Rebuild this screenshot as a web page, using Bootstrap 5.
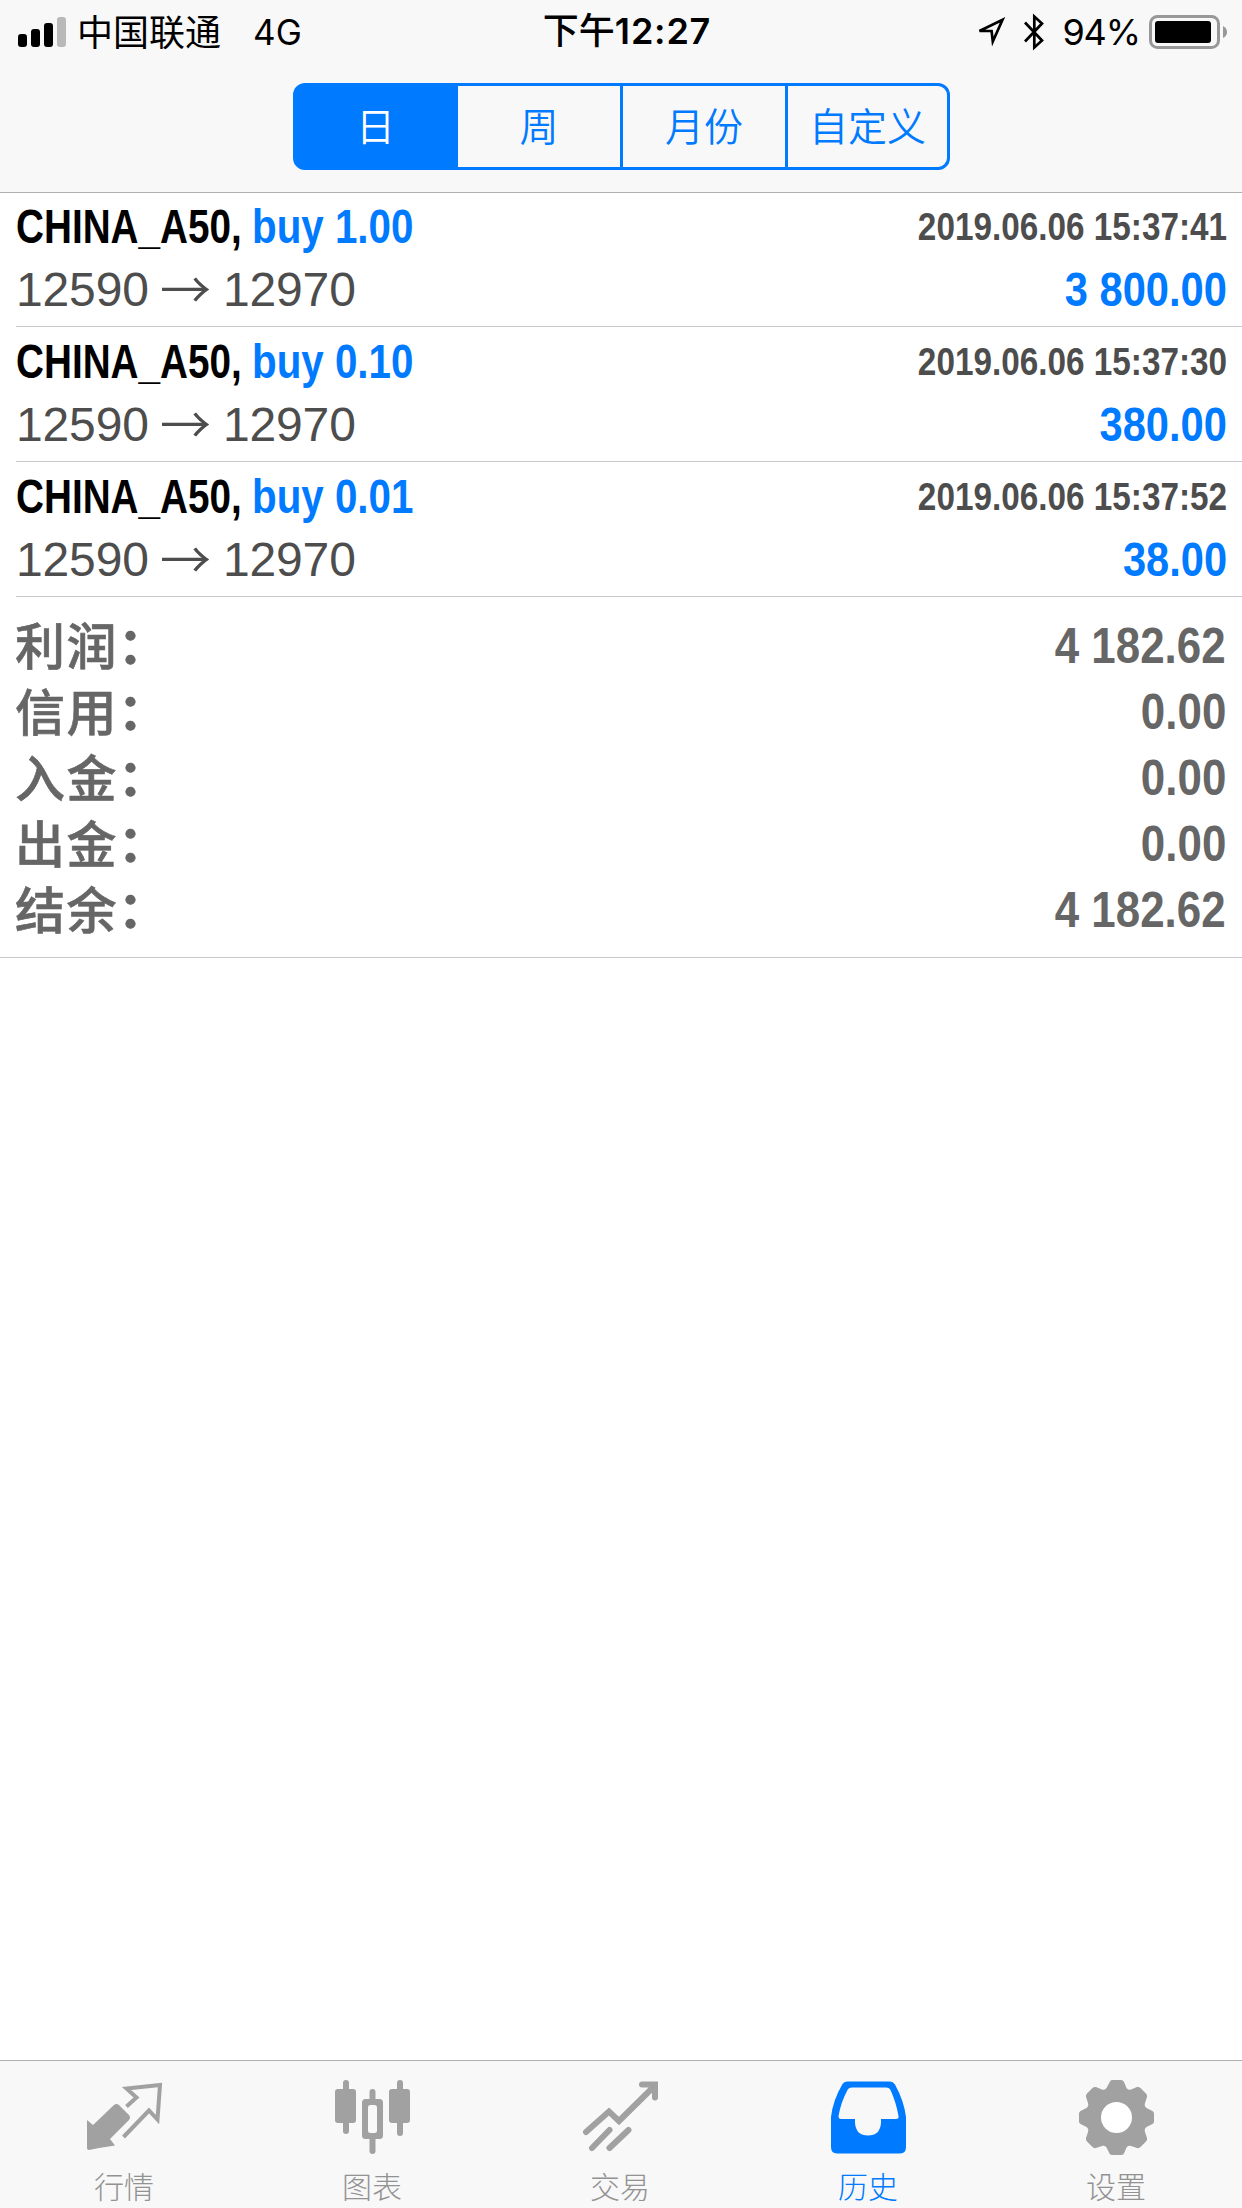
<!DOCTYPE html>
<html lang="zh-CN">
<head>
<meta charset="utf-8">
<meta name="viewport" content="width=device-width, initial-scale=1">
<title>历史</title>
<link href="https://cdn.jsdelivr.net/npm/bootstrap@5.3.0/dist/css/bootstrap.min.css" rel="stylesheet">
<style>
:root{--ios-blue:#007aff;--bar:#f8f8f8}
body{font-family:"Liberation Sans","Noto Sans CJK SC",sans-serif;color:#000;background:#fff}
.screen{height:2208px;width:1242px;overflow:hidden}
.top-area{background:var(--bar);height:193px;border-bottom:1px solid #b0b0b0}
.status{height:64px;padding:0 14px 0 18px;font:400 36px/62px Inter,"Noto Sans CJK SC",sans-serif;white-space:nowrap}
.status>div{flex:1 1 0}
.clock{font-weight:500;font-size:36px;line-height:60px;padding:0 0 3px 8px}
.clock b{font-weight:600;letter-spacing:.8px}
.cn{font-family:"Noto Sans CJK SC",sans-serif}
.carrier{margin-left:11px;font-size:36px;padding-bottom:5px}
.net{margin-left:32px;font-size:35px}
.net,.pct{line-height:60px;padding-bottom:1px}
.pct{letter-spacing:-1.1px;font-size:36px}
.seg{width:657px;height:87px;margin:19px 0 0 293px}
.seg .btn{flex:0 0 168px;padding:0 0 5px;border:3px solid var(--ios-blue);border-radius:12px;color:var(--ios-blue);background:transparent;font:350 39px/76px "Noto Sans CJK SC",sans-serif}
.seg .btn:first-child,.seg .btn:last-child{flex-basis:165px}
.seg .btn+.btn{margin-left:-3px!important}
.seg .btn.active{background:var(--ios-blue);border-color:var(--ios-blue);color:#fff}
main{margin-top:-1px}
.deal{height:135px;padding:5px 0 0;margin-left:16px;border-bottom:1px solid #c8c7cc}
.deal .line-a{height:63px;padding-right:15px}
.deal .line-b{height:60px;padding-right:15px}
.deal span{white-space:nowrap;line-height:60px}
.sym,.act,.when,.gain,.sum-val{font-weight:700;display:inline-block}
.sym{font-size:48px;width:236px;transform:scaleX(.806);transform-origin:0 50%}
.act{font-size:48px;transform:scaleX(.84);transform-origin:0 50%;color:var(--ios-blue)}
.when{font-size:39px;color:#4d4d4d;transform:scaleX(.854);transform-origin:100% 50%}
.gain{font-size:48px;color:var(--ios-blue);transform:scaleX(.867);transform-origin:100% 50%}
.price{font-size:48px;color:#4d4d4d;letter-spacing:-.15px}
.deal .arrow{font-family:"Noto Sans CJK SC",sans-serif;font-weight:350;font-size:51px;line-height:0;vertical-align:-3px;margin:0 -1px 0 -2px}
.sums{padding:16px 16px 0 15px;height:361px;border-bottom:1px solid #c8c7cc;color:#666}
.sum-row{height:66px}
.sum-key{font:500 50px/60px "Noto Sans CJK SC",sans-serif;letter-spacing:1.5px;-webkit-text-stroke:.6px #666}
.sum-key i{font-style:normal;font-weight:700;line-height:0;vertical-align:1px;margin-left:0}
.sum-val{font-size:50px;line-height:66px;transform:scaleX(.878);transform-origin:100% 50%}
.tabs{height:148px;background:var(--bar);border-top:1px solid #b0b0b0;padding-right:2px}
.tab{flex:1 1 0;color:#929292;text-decoration:none;padding-top:19px}
.tab svg{width:75px;height:75px;color:#a1a1a1}
.tab span{font:300 30px/36px "Noto Sans CJK SC",sans-serif;margin-top:12px}
.tab.active,.tab.active svg{color:var(--ios-blue)}
</style>
</head>
<body>
<div class="screen d-flex flex-column">
  <header class="top-area">
    <div class="status d-flex align-items-center">
      <div class="d-flex align-items-center">
        <svg width="48" height="31" viewBox="0 0 48 31"><rect y="17" width="9" height="13" rx="3"/><rect x="13" y="12" width="9" height="18" rx="3"/><rect x="26" y="6" width="9" height="24" rx="3"/><rect x="39" width="9" height="30" rx="3" fill="#b9b9b9"/></svg>
        <span class="carrier cn">中国联通</span><span class="net">4G</span>
      </div>
      <span class="clock">下午<b>12:27</b></span>
      <div class="d-flex align-items-center justify-content-end">
        <svg width="30" height="30" viewBox="0 0 30 30"><path d="M3.500 14 26.500 2.800 16.800 24.500 15.600 14Z" fill="none" stroke="#000" stroke-width="2.700"/></svg>
        <svg class="ms-3" width="24" height="38" viewBox="0 0 24 38"><path d="M3 9.500 20 27.500 12.300 34.500V3.500L20 10.500 3 28.500" fill="none" stroke="#000" stroke-width="2.700"/></svg>
        <span class="pct ms-3">94%</span>
        <svg class="ms-2" width="80" height="36" viewBox="0 0 80 36"><rect x="2.500" y="2.500" width="68" height="31" rx="7" fill="none" stroke="#989898" stroke-width="3"/><rect x="7" y="7" width="56" height="22" rx="3"/><path d="M75 12q4 2 4 6t-4 6z" fill="#989898"/></svg>
      </div>
    </div>
    <div class="seg btn-group">
      <button type="button" class="btn active">日</button>
      <button type="button" class="btn">周</button>
      <button type="button" class="btn">月份</button>
      <button type="button" class="btn">自定义</button>
    </div>
  </header>
  <main class="flex-grow-1">
    <section class="deal">
      <div class="line-a d-flex justify-content-between"><div><span class="sym">CHINA_A50,</span><span class="act">buy 1.00</span></div><span class="when">2019.06.06 15:37:41</span></div>
      <div class="line-b d-flex justify-content-between"><span class="price">12590 <span class="arrow">→</span> 12970</span><span class="gain">3 800.00</span></div>
    </section>
    <section class="deal">
      <div class="line-a d-flex justify-content-between"><div><span class="sym">CHINA_A50,</span><span class="act">buy 0.10</span></div><span class="when">2019.06.06 15:37:30</span></div>
      <div class="line-b d-flex justify-content-between"><span class="price">12590 <span class="arrow">→</span> 12970</span><span class="gain">380.00</span></div>
    </section>
    <section class="deal">
      <div class="line-a d-flex justify-content-between"><div><span class="sym">CHINA_A50,</span><span class="act">buy 0.01</span></div><span class="when">2019.06.06 15:37:52</span></div>
      <div class="line-b d-flex justify-content-between"><span class="price">12590 <span class="arrow">→</span> 12970</span><span class="gain">38.00</span></div>
    </section>
    <section class="sums">
      <div class="sum-row d-flex justify-content-between"><span class="sum-key">利润<i>：</i></span><span class="sum-val">4 182.62</span></div>
      <div class="sum-row d-flex justify-content-between"><span class="sum-key">信用<i>：</i></span><span class="sum-val">0.00</span></div>
      <div class="sum-row d-flex justify-content-between"><span class="sum-key">入金<i>：</i></span><span class="sum-val">0.00</span></div>
      <div class="sum-row d-flex justify-content-between"><span class="sum-key">出金<i>：</i></span><span class="sum-val">0.00</span></div>
      <div class="sum-row d-flex justify-content-between"><span class="sum-key">结余<i>：</i></span><span class="sum-val">4 182.62</span></div>
    </section>
  </main>
  <nav class="tabs d-flex">
    <a class="tab d-flex flex-column align-items-center" href="#">
      <svg viewBox="0 0 75 75"><path d="M0 40 6 45 27 25Q29.500 23 32 25L42 35Q44 37.500 42 40L23 59 28 65.500Q14 67.500 2 70Q0 70 0 68Z" fill="currentColor"/><path d="M39.500 26.500 49.500 17.500 39.500 8.500 73 5 70.500 39.500 62 30.500 36.500 57" fill="none" stroke="currentColor" stroke-width="4"/></svg>
      <span>行情</span></a>
    <a class="tab d-flex flex-column align-items-center" href="#">
      <svg viewBox="0 0 75 75" fill="currentColor"><rect x="8" y="0" width="6" height="54" rx="3"/><rect y="9" width="21" height="34" rx="3"/><rect x="62" y="0" width="6" height="56" rx="3"/><rect x="54" y="9" width="21" height="34" rx="3"/><path d="M34.500 12q0-3 3-3t3 3v7h4q3.500 0 3.500 3.500v33q0 3.500-3.500 3.500h-4v12q0 3-3 3t-3-3v-12h-4q-3.500 0-3.500-3.500v-33q0-3.500 3.500-3.500h4zM35.500 25q-2.500 0-2.500 2.500v23q0 2.500 2.500 2.500h4q2.500 0 2.500-2.500v-23q0-2.500-2.500-2.500z" fill-rule="evenodd"/></svg>
      <span>图表</span></a>
    <a class="tab d-flex flex-column align-items-center" href="#">
      <svg viewBox="0 0 75 75"><path d="M3 52 26 31.500 36 41 71.500 6M59 4.500H72V17.500M9 68 26.500 50M26.500 68 45.500 50" fill="none" stroke="currentColor" stroke-width="6" stroke-linecap="round"/></svg>
      <span>交易</span></a>
    <a class="tab active d-flex flex-column align-items-center" href="#">
      <svg viewBox="0 0 75 75"><path d="M11.500 4Q13 1.500 16 1.500H59Q62 1.500 64 4.500Q73 21 75 37V67Q75 73.500 69 73.500H6Q0 73.500 0 67V37Q2 20 11.500 4ZM21 7.500Q17.500 7.500 16.500 10Q10 22 7.500 36Q7.500 39 10 39H24V43Q25 55.500 37 55.500Q49 55.500 50 43V39H65Q68 39 67.500 36Q65 22 59.500 10Q58.500 7.500 55 7.500Z" fill="currentColor" fill-rule="evenodd"/></svg>
      <span>历史</span></a>
    <a class="tab d-flex flex-column align-items-center" href="#">
      <svg viewBox="0 0 75 75"><path d="M31 1.500Q31.500 0 33 0H42Q44 0 45 2L47.500 8Q49 10.500 52 9.500L58 7Q60 6.500 61.500 8L67 13.500Q68.500 15 68 17L66 23Q65 26 67.500 28L73.500 31Q75 32 75 33.500V41.500Q75 43 73.500 44L67.500 47Q65 49 66 52L68 58Q68.500 60 67 61.500L61.500 67Q60 68.500 58 68L52 66Q49 65 47.500 67.500L45 73.500Q44 75 42 75H33Q31.500 75 30.500 73.500L27.500 67.500Q26 65 23 66L17 68Q15 68.500 13.500 67L8 61.500Q6.500 60 7 58L9 52Q10 49 7.500 47L1.500 44Q0 43 0 41.500V33.500Q0 32 1.500 31L7.500 28Q10 26 9 23L7 17Q6.500 15 8 13.500L13.500 8Q15 6.500 17 7L23 9.500Q26 10.500 27.500 8Z" fill="currentColor"/><circle cx="37.500" cy="37.500" r="15.500" fill="#fff"/></svg>
      <span>设置</span></a>
  </nav>
</div>
<script src="https://cdn.jsdelivr.net/npm/bootstrap@5.3.0/dist/js/bootstrap.bundle.min.js"></script>
</body>
</html>
